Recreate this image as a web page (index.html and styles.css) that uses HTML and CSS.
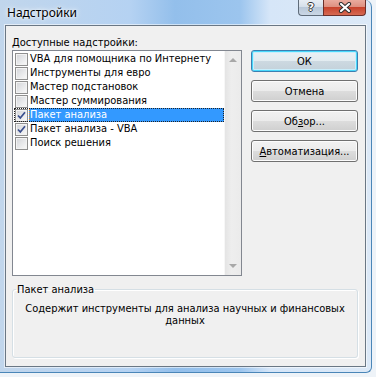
FILE: index.html
```html
<!DOCTYPE html>
<html lang="ru">
<head>
  <meta charset="UTF-8" />
  <title>Надстройки</title>
  <link rel="stylesheet" href="styles.css">
</head>
<body>

  <div class="window">
    <div class="titlebar">
      <span class="title">Надстройки</span>
      <div class="caption-buttons">
        <span class="cap-btn help">?</span>
        <span class="cap-btn close">
          <svg width="14" height="11" viewBox="0 0 14 11">
            <path d="M3 2 L11 9 M11 2 L3 9" stroke="#2e2e2e" stroke-width="4.2" stroke-linecap="round"/>
            <path d="M3 2 L11 9 M11 2 L3 9" stroke="#fff" stroke-width="2.2" stroke-linecap="round"/>
          </svg>
        </span>
      </div>
    </div>

    <div class="client">
      <div class="main">
        <div class="addins">
          <div class="caption"><u>Д</u>оступные надстройки:</div>
          <div class="listbox">
            <ul class="items">
              <li class="item"><span class="check"></span><span class="name">VBA для помощника по Интернету</span></li>
              <li class="item"><span class="check"></span><span class="name">Инструменты для евро</span></li>
              <li class="item"><span class="check"></span><span class="name">Мастер подстановок</span></li>
              <li class="item"><span class="check"></span><span class="name">Мастер суммирования</span></li>
              <li class="item focus">
                <span class="check checked"><svg width="11" height="11" viewBox="0 0 11 11"><path d="M2 5.5 L4.3 8 L9 2.2" fill="none" stroke="#3a4f8e" stroke-width="1.7"/></svg></span>
                <span class="name">Пакет анализа</span>
              </li>
              <li class="item">
                <span class="check checked"><svg width="11" height="11" viewBox="0 0 11 11"><path d="M2 5.5 L4.3 8 L9 2.2" fill="none" stroke="#3a4f8e" stroke-width="1.7"/></svg></span>
                <span class="name">Пакет анализа - VBA</span>
              </li>
              <li class="item"><span class="check"></span><span class="name">Поиск решения</span></li>
            </ul>
            <div class="scrollbar">
              <span class="arrow up"></span>
              <span class="arrow down"></span>
            </div>
          </div>
        </div>

        <div class="actions">
          <button class="btn default">ОК</button>
          <button class="btn">Отмена</button>
          <button class="btn">Об<u>з</u>ор...</button>
          <button class="btn"><u>А</u>втоматизация...</button>
        </div>
      </div>

      <fieldset class="details">
        <legend>Пакет анализа</legend>
        <p>Содержит инструменты для анализа научных и финансовых данных</p>
      </fieldset>
    </div>
  </div>

</body>
</html>
```

FILE: styles.css
```css
:root {
  --face: #f0f0f0;
  --ui-font: 'DejaVu Sans Condensed', 'DejaVu Sans', sans-serif;
  --highlight: #3399ff;
}

body {
  margin: 0;
  background: #eef3f8;
  font-family: var(--ui-font);
  font-size: 11px;
  color: #000;
}

.window {
  width: 372px;
  height: 373px;
  box-sizing: border-box;
  padding: 0 5px 5px;
  border-right: 1px solid #4a86b8;
  border-bottom: 1px solid #4a86b8;
  border-top-right-radius: 7px;
  border-bottom-right-radius: 6px;
  background:
    linear-gradient(to right,
      #c1d6ec 0,
      #b5d2f2 130px,
      #93bfeb 175px,
      #9cc5ee 240px,
      #d6e6f8 270px,
      #dce9f7 100%);
}

/* title bar */

.titlebar {
  height: 25px;
  display: flex;
  align-items: flex-start;
}

.title {
  padding: 5px 0 0 2px;
  line-height: 16px;
  font-family: 'Noto Sans', sans-serif;
  font-size: 12px;
  text-shadow: 0 0 6px #fff, 0 0 3px #fff;
}

.caption-buttons {
  margin-left: auto;
  display: flex;
}

.cap-btn {
  height: 16px;
  box-sizing: border-box;
  display: flex;
  align-items: center;
  justify-content: center;
  border: 1px solid #5f6c7a;
  border-top: none;
}

.help {
  width: 25px;
  border-right: none;
  border-bottom-left-radius: 4px;
  background: linear-gradient(#e7edf4 0%, #d5dfea 45%, #b9c8d9 50%, #cad7e5 100%);
  font-family: 'DejaVu Sans', sans-serif;
  font-weight: bold;
  font-size: 11px;
  color: #fff;
  text-shadow: 1px 0 0 #333, -1px 0 0 #333, 0 1px 0 #333, 0 -1px 0 #333;
}

.close {
  width: 43px;
  border-color: #6b2f2a;
  border-bottom-right-radius: 4px;
  background: linear-gradient(#eaab9e 0%, #de9081 45%, #c8432d 50%, #d66a52 100%);
}

/* client area */

.client {
  height: 342px;
  box-sizing: border-box;
  padding: 10px 7px 8px 6px;
  border: 1px solid #6a7784;
  background: var(--face);
  box-shadow: 0 0 0 1px rgba(255, 255, 255, 0.55);
}

.main {
  display: flex;
  gap: 9px;
}

.caption {
  line-height: 13px;
  margin-bottom: 1px;
}

.listbox {
  width: 230px;
  height: 226px;
  box-sizing: border-box;
  border: 1px solid #828790;
  display: flex;
  background: #fff;
}

.items {
  flex: 1;
  margin: 0;
  padding: 1px 0 0;
  list-style: none;
}

.item {
  height: 14px;
  margin-left: 1px;
  display: flex;
  align-items: center;
}

.check {
  width: 13px;
  height: 13px;
  box-sizing: border-box;
  margin-left: 1px;
  border: 1px solid #8f8f8f;
  background: linear-gradient(135deg, #d2d4d8 0%, #e6e7e9 50%, #fafafa 100%);
  box-shadow: inset 0 0 0 1px #f3f3f3;
  display: flex;
  align-items: center;
  justify-content: center;
}

.name {
  flex: 1;
  margin-left: 1px;
  padding-left: 1px;
  line-height: 14px;
  white-space: nowrap;
}

.item.focus {
  outline: 1px dotted #222;
  outline-offset: -1px;
}

.item.focus .name {
  background: var(--highlight);
  color: #fff;
  outline: 1px dotted #f09030;
  outline-offset: -1px;
}

.scrollbar {
  width: 17px;
  box-sizing: border-box;
  padding: 7px 0;
  border-left: 1px solid #f7f7f7;
  background: linear-gradient(to right, #e4e4e4, #eeeeee 40%, #ebebeb);
  display: flex;
  flex-direction: column;
  justify-content: space-between;
  align-items: center;
}

.arrow {
  width: 0;
  height: 0;
  border-left: 4px solid transparent;
  border-right: 4px solid transparent;
}

.arrow.up {
  border-bottom: 4px solid #a8a8a8;
}

.arrow.down {
  border-top: 4px solid #a8a8a8;
}

/* buttons */

.actions {
  padding-top: 14px;
  display: flex;
  flex-direction: column;
  gap: 8px;
}

.btn {
  width: 107px;
  height: 22px;
  padding: 0;
  border: 1px solid #707070;
  border-radius: 3px;
  box-shadow: inset 0 0 0 1px #fcfcfc;
  background: linear-gradient(#f2f2f2 0%, #ebebeb 50%, #dddddd 50%, #cfcfcf 100%);
  font-family: var(--ui-font);
  font-size: 11px;
  color: #000;
}

.btn.default {
  border-color: #3c7fb1;
  box-shadow: inset 0 0 0 1px #48d8fb, inset 0 0 0 2px #c8eefc;
  background: linear-gradient(#eaf1f5 0%, #e2ebf0 50%, #cdd9e1 50%, #c3d1da 100%);
}

/* description group */

.details {
  margin: 7px 0 0;
  padding: 7px 3px 30px;
  min-width: 0;
  border: 1px solid #d5dfe5;
  border-radius: 3px;
  box-shadow: inset 1px 1px 0 #fff, 1px 1px 0 #fff;
}

.details legend {
  padding: 0 1px;
  line-height: 13px;
}

.details p {
  margin: 0;
  text-align: center;
  line-height: 12px;
}
```
